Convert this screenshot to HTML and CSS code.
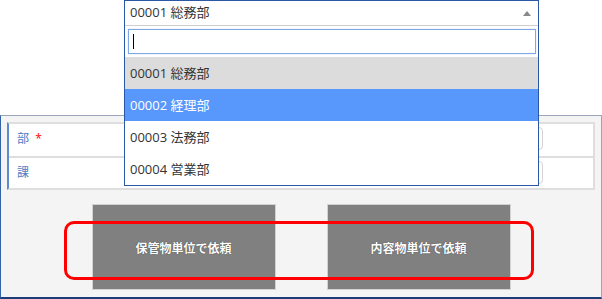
FILE: index.html
```html
<!DOCTYPE html>
<html lang="ja">
<head>
    <meta charset="UTF-8">
    <title>依頼</title>
    <link rel="stylesheet" href="styles.css">
</head>
<body>
<div class="page">
    <div class="panel">
        <div class="form-table">
            <div class="row">
                <div class="label">部 <span class="req">*</span></div>
                <div class="field"><div class="input"></div></div>
            </div>
            <div class="row">
                <div class="label">課</div>
                <div class="field"><div class="input"></div></div>
            </div>
        </div>
        <div class="actions">
            <a href="javascript:;" class="btn">保管物単位で依頼</a>
            <a href="javascript:;" class="btn">内容物単位で依頼</a>
        </div>
        <div class="mark"></div>
    </div>

    <!-- 開いた状態のドロップダウン -->
    <div class="drop">
        <div class="drop-head">
            <span>00001 総務部</span>
            <span class="arrow-up"></span>
        </div>
        <div class="drop-search">
            <div class="search-box"><span class="caret"></span></div>
        </div>
        <ul class="options">
            <li class="hover">00001 総務部</li>
            <li class="active">00002 経理部</li>
            <li>00003 法務部</li>
            <li>00004 営業部</li>
        </ul>
    </div>
</div>
</body>
</html>
```

FILE: styles.css
```css
*{
    margin: 0;
    padding: 0;
    box-sizing: border-box;
}
a{
    text-decoration: none;
}
body {
    width: 602px;
    height: 299px;
    overflow: hidden;
    background: #fff;
    font-family: "Open Sans", "Noto Sans CJK JP", sans-serif;
    font-size: 13px;
    color: #333;
}
.page {
    position: relative;
    height: 299px;
    padding-top: 115px;
}
.panel {
    position: relative;
    height: 184px;
    background: #f4f4f4;
    border: 1px solid #9aa6bb;
    border-left-color: #3563a8;
    border-bottom: 2px solid #1d3d78;
    padding: 6px 6px 0 6px;
}
.form-table {
    background: #fff;
    border: 2px solid #dedede;
    border-left: 2px solid #5b8bd0;
}
.row {
    display: flex;
    height: 32px;
}
.row + .row {
    border-top: 2px solid #dedede;
}
.label {
    width: 115px;
    padding-left: 8px;
    line-height: 30px;
    font-size: 12px;
    color: #4a7cc4;
}
.req {
    color: #f00;
    margin-left: 3px;
}
.field {
    padding-top: 3px;
}
.input {
    width: 419px;
    height: 23px;
    border: 1px solid #d4d4d4;
    border-radius: 4px;
    background: #fff;
}
.actions {
    display: flex;
    justify-content: center;
    gap: 51px;
    margin-top: 14px;
}
.btn {
    display: flex;
    align-items: center;
    justify-content: center;
    width: 184px;
    height: 86px;
    background: #808080;
    border: 1px solid #d2d2d2;
    color: #fff;
    font-family: "Noto Sans CJK JP", sans-serif;
    font-size: 12px;
    font-weight: bold;
    text-shadow: 0 0 1px #333;
}
.mark {
    position: absolute;   /* 注目枠 */
    left: 63px;
    top: 105px;
    width: 470px;
    height: 59px;
    border: 3px solid #f00;
    border-radius: 10px;
}
.drop {
    position: absolute;
    top: 0;
    left: 124px;
    width: 415px;
    background: #fff;
    border: 1px solid #2a58a4;
    z-index: 2;
}
.drop-head {
    position: relative;
    height: 25px;
    line-height: 23px;
    padding-left: 5px;
    border-bottom: 1px solid #cfcfcf;
}
.arrow-up {
    position: absolute;
    right: 7px;
    top: 10px;
    width: 0;
    height: 0;
    border-left: 4px solid transparent;
    border-right: 4px solid transparent;
    border-bottom: 5px solid #888;
}
.drop-search {
    padding: 3px 2px 3px 3px;
}
.search-box {
    height: 25px;
    border: 1px solid #7da7e6;
    box-shadow: 0 0 1px #a9c6f2;
    padding: 4px 4px;
}
.caret {
    display: block;
    width: 1px;
    height: 15px;
    background: #000;
}
.options {
    list-style: none;
}
.options li {
    height: 32px;
    line-height: 32px;
    padding-left: 5px;
}
.options .hover {
    background: #dcdcdc;
}
.options .active {
    background: #5897fb;
    color: #fff;
}
```
